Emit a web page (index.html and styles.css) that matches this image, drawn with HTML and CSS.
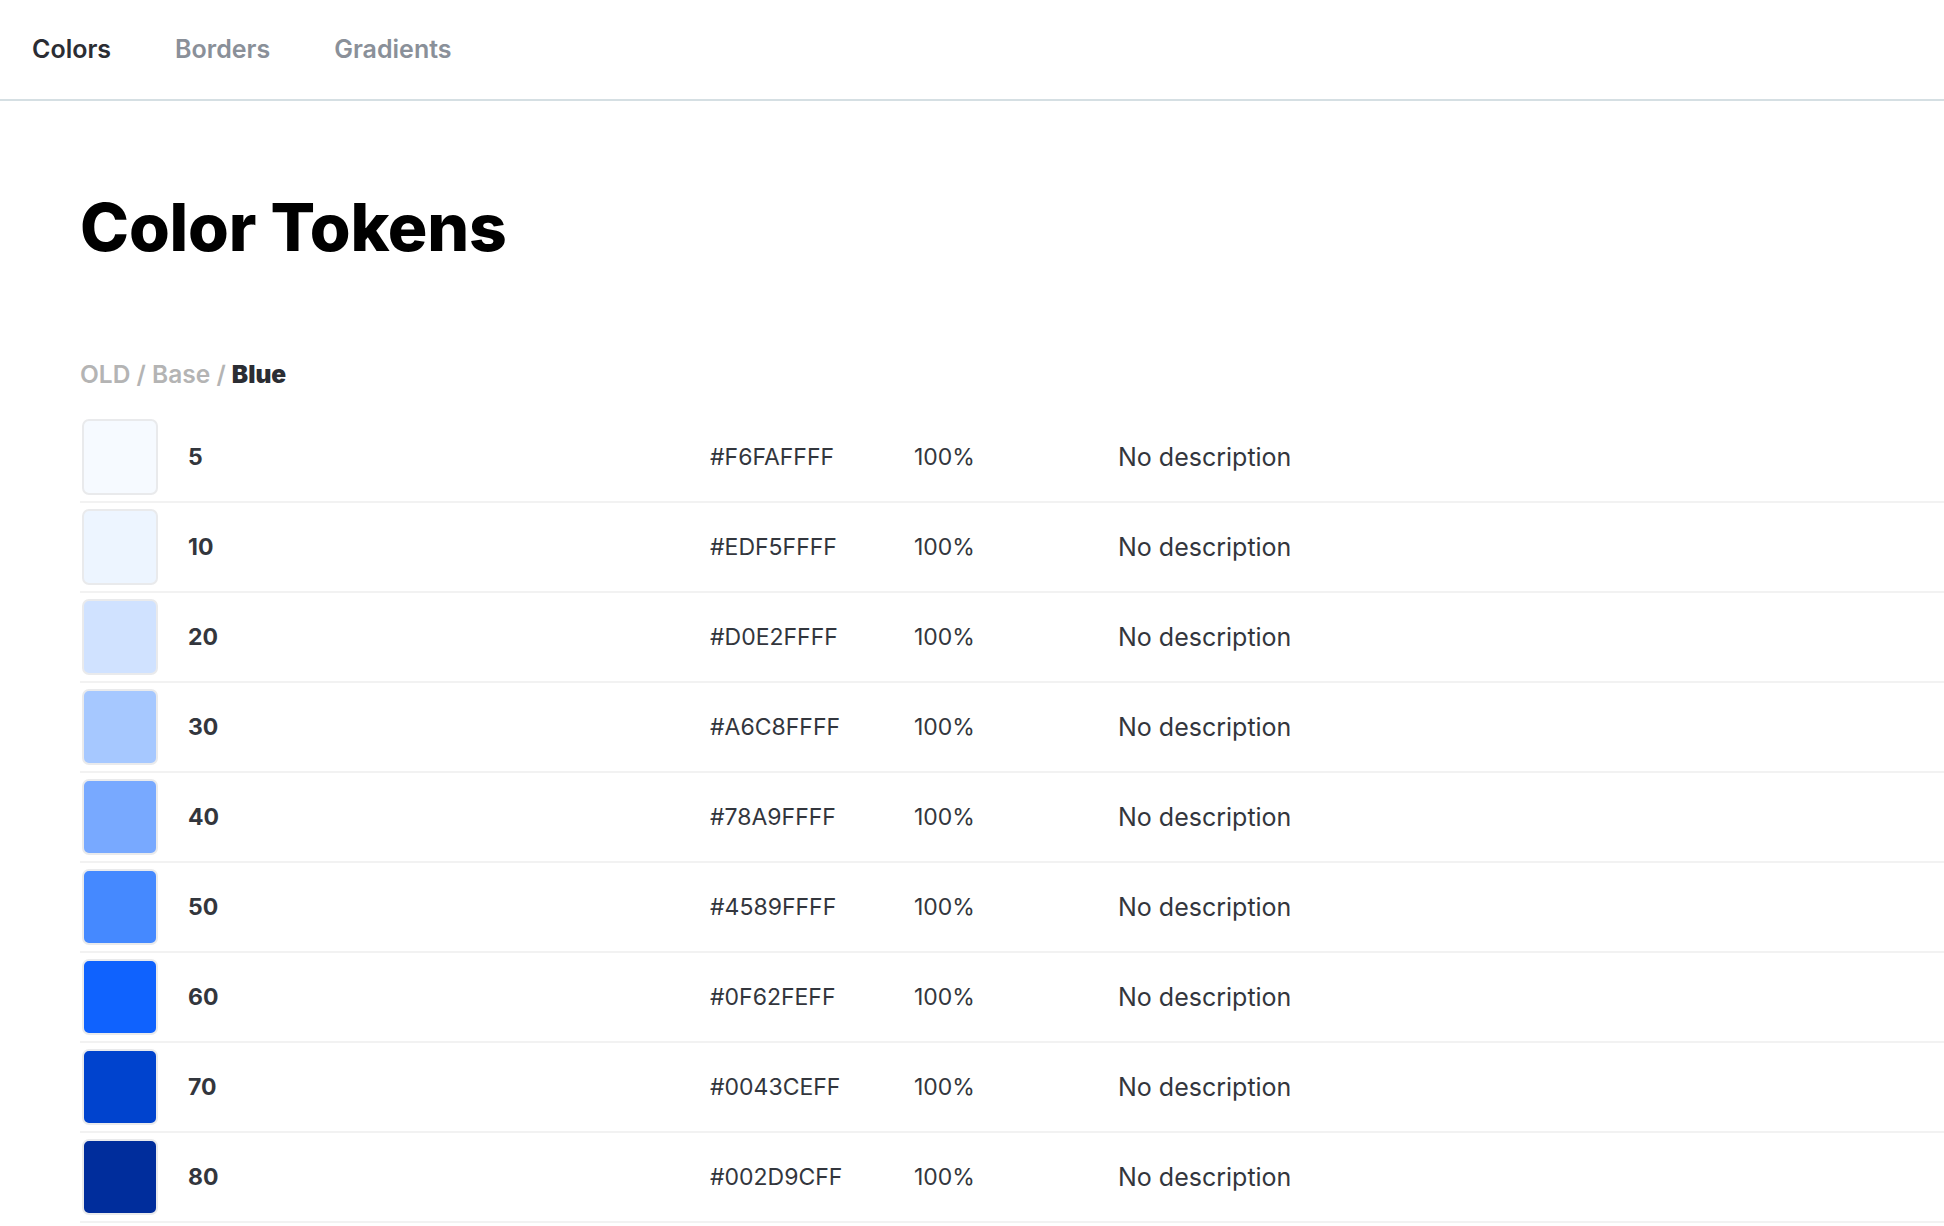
FILE: index.html
```html
<html>
<head>
  <meta charset="UTF-8" />
  <title>Color Tokens</title>
  <link rel="stylesheet" href="styles.css">
</head>
<body>

  <div class="tabs">
    <a class="tab active">Colors</a>
    <a class="tab">Borders</a>
    <a class="tab">Gradients</a>
  </div>

  <div class="page">
    <h1>Color Tokens</h1>

    <div class="crumbs">
      <span>OLD</span> / <span>Base</span> / <b>Blue</b>
    </div>

    <div class="tokens">
      <div class="token">
        <div class="cell"><div class="swatch c5"></div></div>
        <div class="name">5</div>
        <div>#F6FAFFFF</div>
        <div>100%</div>
        <div class="desc">No description</div>
      </div>
      <div class="token">
        <div class="cell"><div class="swatch c10"></div></div>
        <div class="name">10</div>
        <div>#EDF5FFFF</div>
        <div>100%</div>
        <div class="desc">No description</div>
      </div>
      <div class="token">
        <div class="cell"><div class="swatch c20"></div></div>
        <div class="name">20</div>
        <div>#D0E2FFFF</div>
        <div>100%</div>
        <div class="desc">No description</div>
      </div>
      <div class="token">
        <div class="cell"><div class="swatch c30"></div></div>
        <div class="name">30</div>
        <div>#A6C8FFFF</div>
        <div>100%</div>
        <div class="desc">No description</div>
      </div>
      <div class="token">
        <div class="cell"><div class="swatch c40"></div></div>
        <div class="name">40</div>
        <div>#78A9FFFF</div>
        <div>100%</div>
        <div class="desc">No description</div>
      </div>
      <div class="token">
        <div class="cell"><div class="swatch c50"></div></div>
        <div class="name">50</div>
        <div>#4589FFFF</div>
        <div>100%</div>
        <div class="desc">No description</div>
      </div>
      <div class="token">
        <div class="cell"><div class="swatch c60"></div></div>
        <div class="name">60</div>
        <div>#0F62FEFF</div>
        <div>100%</div>
        <div class="desc">No description</div>
      </div>
      <div class="token">
        <div class="cell"><div class="swatch c70"></div></div>
        <div class="name">70</div>
        <div>#0043CEFF</div>
        <div>100%</div>
        <div class="desc">No description</div>
      </div>
      <div class="token">
        <div class="cell"><div class="swatch c80"></div></div>
        <div class="name">80</div>
        <div>#002D9CFF</div>
        <div>100%</div>
        <div class="desc">No description</div>
      </div>
    </div>
  </div>

</body>
</html>
```

FILE: styles.css
```css
body {
  font-family: "Inter", "Noto Sans", sans-serif;
  background-color: #fff;
  margin: 0;
  color: #33363d;
  overflow: hidden;
}
.tabs {
  display: flex;
  gap: 64px;
  height: 101px;
  align-items: center;
  padding-left: 32px;
  border-bottom: 2px solid #d5dfe3;
  box-sizing: border-box;
}
.tab {
  font-size: 25px;
  font-weight: 600;
  color: #8a9099;
  margin-top: -2px;
}
.tab.active {
  color: #2b2d33;
}
.page {
  padding-left: 80px;
}
h1 {
  font-size: 66px;
  line-height: 80px;
  font-weight: 800;
  color: #000;
  margin: 86px 0 0 0;
  letter-spacing: -0.2px;
}
.crumbs {
  font-size: 24.5px;
  line-height: 30px;
  font-weight: 600;
  color: #b4b4b4;
  margin-top: 92px;
  margin-bottom: 24px;
}
.crumbs b {
  color: #2b2d33;
}
.token {
  display: grid;
  grid-template-columns: 108px 522px 204px 204px 1fr;
  align-items: center;
  padding: 6px 0;
  border-bottom: 2px solid #f2f2f2;
  font-size: 23px;
}
.swatch {
  width: 72px;
  height: 72px;
  margin-left: 2px;
  border: 2px solid #e9eaec;
  border-radius: 7px;
}
.name {
  font-weight: 700;
}
.desc {
  font-size: 25px;
}
.c5 { background-color: #f6faff; }
.c10 { background-color: #edf5ff; }
.c20 { background-color: #d0e2ff; }
.c30 { background-color: #a6c8ff; }
.c40 { background-color: #78a9ff; }
.c50 { background-color: #4589ff; }
.c60 { background-color: #0f62fe; }
.c70 { background-color: #0043ce; }
.c80 { background-color: #002d9c; }
```
